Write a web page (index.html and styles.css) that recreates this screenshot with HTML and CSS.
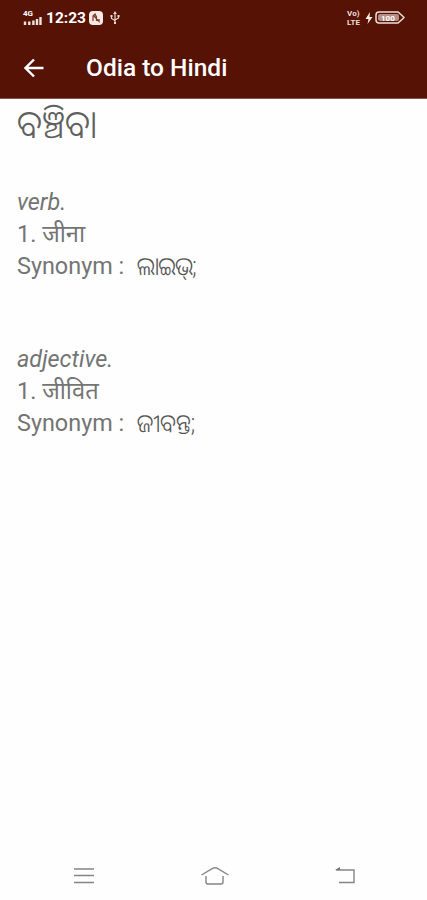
FILE: index.html
```html
<!DOCTYPE html>
<html lang="or">
<head>
  <meta charset="UTF-8" />
  <meta name="viewport" content="width=device-width, initial-scale=1.0">
  <title>Odia to Hindi</title>
  <link rel="stylesheet" href="styles.css">
</head>
<body>

<header>
  <div class="status-bar">
    <div class="status-group">
      <div class="signal">
        <span class="network">4G</span>
        <svg width="19" height="8" viewBox="0 0 19 8">
          <path d="M2 8V4.500M6.300 8V4.500M10.400 8V3.500M14 8V2M17.500 8V0" />
        </svg>
      </div>
      <span class="clock">12:23</span>
      <svg class="app-icon" width="14" height="14" viewBox="0 0 14 14">
        <rect width="14" height="14" rx="4" fill="#f6e9e4" />
        <path d="M4 10V5l2-2 1.500 3v4M5 5l5 5.500V8" fill="none" stroke="#7c382b" stroke-width="1.200" />
      </svg>
      <svg class="usb" width="10" height="13" viewBox="0 0 10 13">
        <path d="M5 12V2M1.500 5v2.500L5 9.500M8.500 4v3L5 9" />
        <path class="tip" d="M5 0 6.800 3H3.200zM.5 4h2v2h-2zM7.500 4h2v2h-2zM4 11h2v2H4z" />
      </svg>
    </div>
    <div class="status-group">
      <div class="volte"><span>Vo)</span><span>LTE</span></div>
      <svg class="bolt" width="8" height="12" viewBox="0 0 8 12"><path d="M5 0 .5 7h3L2.500 12 7.500 5H4.500z" fill="#fbeee9" /></svg>
      <svg class="battery" width="30" height="13" viewBox="0 0 30 13">
        <path d="M4 1h19l4 3.500 2 2-2 2L23 12H4Q1 12 1 9V4Q1 1 4 1z" fill="none" stroke="#efdfda" stroke-width="1.500" />
        <rect x="3" y="3" width="21" height="7" rx="2" fill="#b48f86" />
        <text x="6" y="9.500">100</text>
      </svg>
    </div>
  </div>
  <div class="app-bar">
    <a href="#" class="back">
      <svg width="20" height="20" viewBox="0 0 20 20">
        <path d="M19.500 10H2M10 1.500 1.500 10l8.500 8.500" fill="none" stroke="#fff" stroke-width="2.400" />
      </svg>
    </a>
    <h1>Odia to Hindi</h1>
  </div>
</header>

<main>
  <h2>ବଞ୍ଚିବା</h2>
  <section class="entry">
    <p class="part">verb.</p>
    <p>1. <span class="hindi">जीना</span></p>
    <p>Synonym :&nbsp; <span class="odia narrow">ଲାଇଭ୍;</span></p>
  </section>
  <section class="entry">
    <p class="part">adjective.</p>
    <p>1. <span class="hindi">जीवित</span></p>
    <p>Synonym :&nbsp; <span class="odia">ଜୀବନ୍ତ;</span></p>
  </section>
</main>

<nav>
  <svg width="20" height="18" viewBox="0 0 20 18"><path d="M0 2h20M0 8.500h20M0 15.500h20" /></svg>
  <svg width="28" height="20" viewBox="0 0 28 20"><path d="M.5 9 12 2.200Q14 1.200 16 2.200L27.500 9M5 10v6q0 2 2 2h13q2 0 2-2v-6" /></svg>
  <svg width="20" height="18" viewBox="0 0 20 18"><path d="M1 3h18v12.500H4" /><path class="arrow" d="M0 3 5 0v3z" /></svg>
</nav>

</body>
</html>
```
FILE: styles.css
```css
body {
  margin: 0;
  min-height: 100vh;
  display: flex;
  flex-direction: column;
  font-family: Roboto, "Noto Sans Oriya", "Noto Sans Devanagari", "Noto Sans", sans-serif;
  color: #747474;
  background-color: #fefefe;
}

header {
  height: 98px;
  background-color: #551205;
  color: white;
  border-bottom: 1px solid #84574d;
}
.status-bar {
  height: 35px;
  padding: 0 22px 0 23px;
  display: flex;
  justify-content: space-between;
  align-items: center;
}
.status-group {
  display: flex;
  align-items: center;
}
.signal {
  display: flex;
  flex-direction: column;
  margin-right: 4px;
}
.network {
  font-size: 8px;
  line-height: 6px;
  font-weight: bold;
}
.signal path {
  stroke: #f3e3de;
  stroke-width: 2.400;
}
.clock {
  font-size: 15.500px;
  font-weight: bold;
  width: 43px;
}
.usb {
  margin-left: 7px;
}
.usb path {
  fill: none;
  stroke: #ecd9d3;
  stroke-width: 1.200;
}
.usb .tip {
  fill: #ecd9d3;
  stroke: none;
}
.volte {
  display: flex;
  flex-direction: column;
  font-size: 8px;
  line-height: 9px;
  font-weight: bold;
  color: #f0dfda;
}
.bolt {
  margin: 0 2px 0 5px;
}
.battery text {
  font-size: 8px;
  font-weight: bold;
  fill: #fff;
}

.app-bar {
  height: 65px;
  padding-left: 24px;
  display: flex;
  align-items: center;
}
.back {
  display: flex;
  width: 62px;
}
h1 {
  margin: 0;
  font-size: 24.500px;
  font-weight: 500;
}

main {
  flex: 1;
  padding: 0 17px;
  font-size: 23.400px;
  line-height: 32px;
}
h2 {
  margin: 0 0 35px;
  font-size: 35.500px;
  line-height: 52px;
  font-weight: 300;
  color: #606060;
  transform: scaleY(1.1);
}
p {
  margin: 0;
  height: 32px;
  white-space: nowrap;
}
.entry {
  margin-bottom: 61px;
}
.part {
  font-style: italic;
}
.hindi {
  font-size: 23.700px;
}
.odia {
  display: inline-block;
  margin-left: 1px;
  font-size: 22.500px;
  font-weight: 300;
  color: #555;
  transform: scaleY(1.12);
}
.narrow {
  letter-spacing: -0.9px;
}

nav {
  height: 49px;
  padding: 0 72px 0 74px;
  display: flex;
  justify-content: space-between;
  align-items: center;
}
nav path {
  fill: none;
  stroke: #858585;
  stroke-width: 1.400;
}
nav .arrow {
  fill: #777;
  stroke: none;
}
```
